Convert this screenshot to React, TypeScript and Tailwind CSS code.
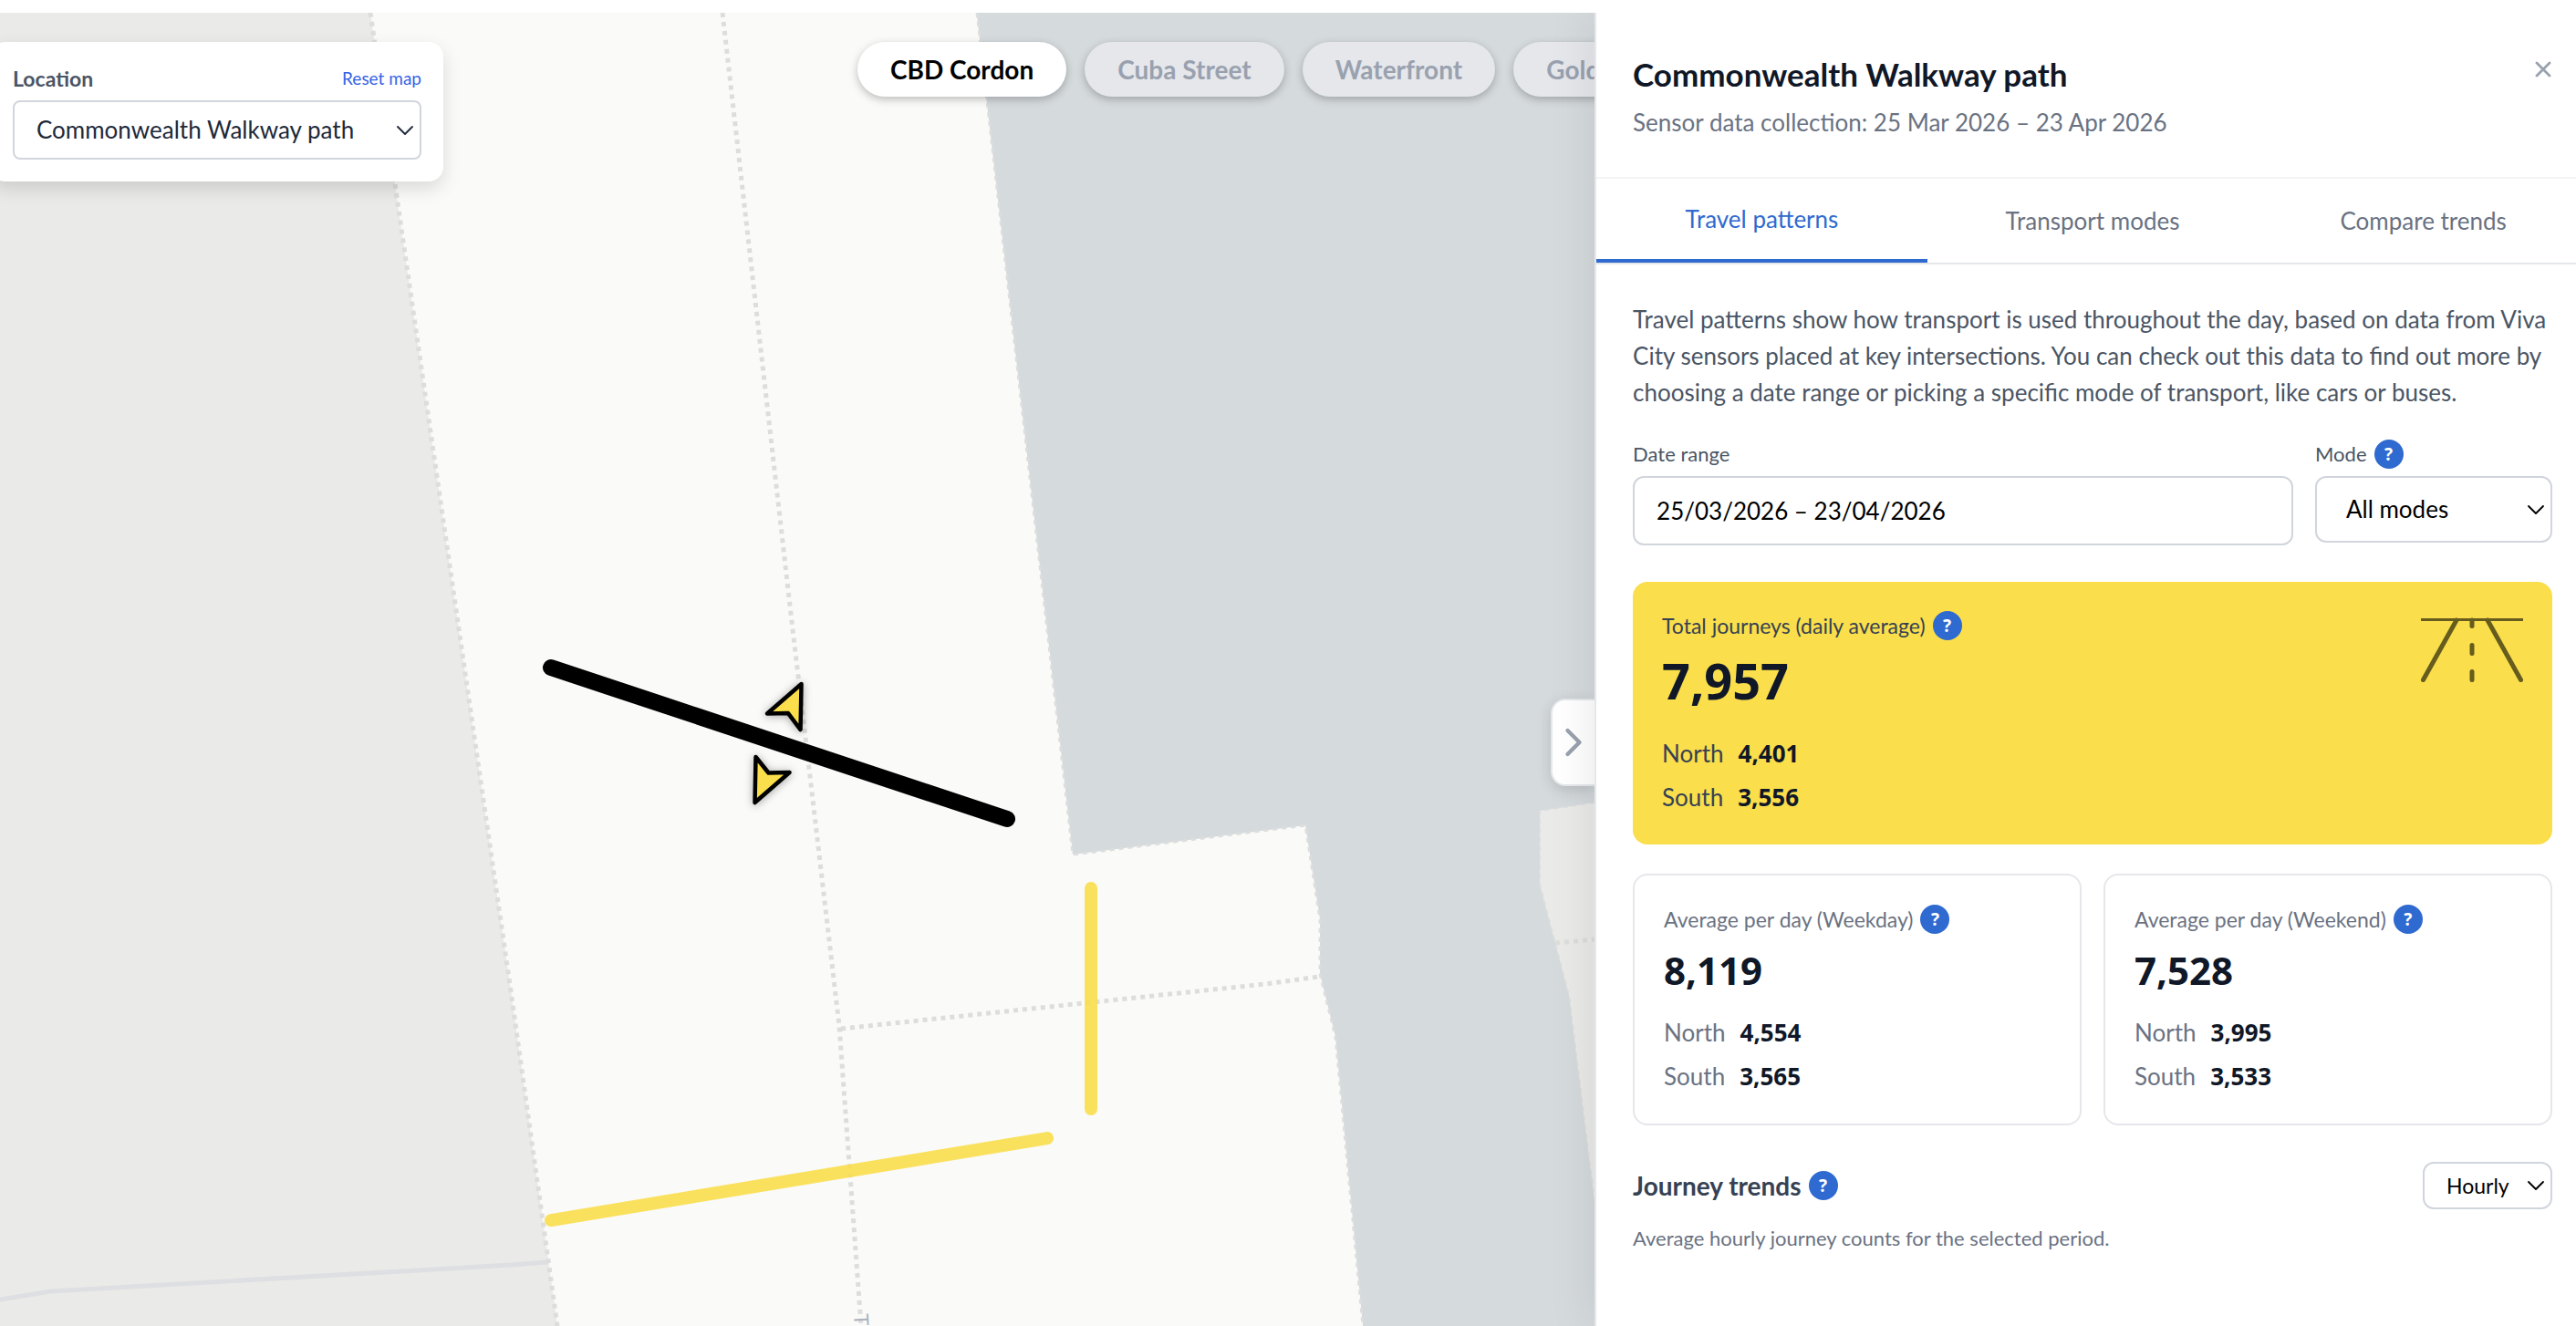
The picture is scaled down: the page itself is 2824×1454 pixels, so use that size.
import React from 'react';
import { ChevronDown, ChevronRight, X } from 'lucide-react';

const areas = ['CBD Cordon', 'Cuba Street', 'Waterfront', 'Golden Mile'];
const tabs = ['Travel patterns', 'Transport modes', 'Compare trends'];

function Help({ topic }: { topic: string }) {
  return (
    <button
      type="button"
      aria-label={`About ${topic}`}
      className="flex size-8 shrink-0 items-center justify-center rounded-full bg-[#2f6ad0] font-['Noto_Sans',sans-serif] text-[19px] leading-none font-bold text-white"
    >
      ?
    </button>
  );
}

function Chevron() {
  return (
    <ChevronDown
      aria-hidden
      strokeWidth={1.4}
      className="pointer-events-none absolute top-1/2 right-0.5 size-8 -translate-y-1/2"
    />
  );
}

function Directions({ north, south, label }: { north: string; south: string; label: string }) {
  return (
    <dl className={`flex flex-col gap-2 text-[26px] leading-10 ${label}`}>
      <div className="flex gap-4">
        <dt>North</dt>
        <dd className="font-['Noto_Sans',sans-serif] font-bold text-gray-900">{north}</dd>
      </div>
      <div className="flex gap-4">
        <dt>South</dt>
        <dd className="font-['Noto_Sans',sans-serif] font-bold text-gray-900">{south}</dd>
      </div>
    </dl>
  );
}

function AverageCard(props: { title: string; total: string; north: string; south: string }) {
  return (
    <article className="flex-1 rounded-2xl border-2 border-gray-200 p-8">
      <div className="flex h-8 items-center gap-2 text-[23px] text-gray-500">
        <h3>{props.title}</h3>
        <Help topic={props.title} />
      </div>
      <p className="mt-1 mb-3 font-['Noto_Sans',sans-serif] text-[42px] leading-[72px] font-bold text-gray-900">
        {props.total}
      </p>
      <Directions north={props.north} south={props.south} label="text-gray-500" />
    </article>
  );
}

function RoadIcon() {
  return (
    <svg aria-hidden viewBox="0 0 112 80" className="h-20 w-28 text-[#655c1d]" fill="none" stroke="currentColor">
      <path d="M0 9.5H112" strokeWidth="3" />
      <g strokeWidth="5" strokeLinecap="round">
        <path d="M39 10 2.5 75.5M73 10l36.500 65.500" />
        <path d="M56 10v6.500M56 37.500v9M56 66.500v9" />
      </g>
    </svg>
  );
}

function MapCanvas() {
  return (
    <svg
      role="img"
      aria-label="Map of sensor locations"
      viewBox="0 14 1748 1440"
      preserveAspectRatio="xMinYMin slice"
      className="absolute inset-0 size-full bg-[#d5dadd]"
      fill="none"
    >
      <path d="M0 0H410L560 1087 611 1454H0Z" fill="#eaeae8" />
      <path d="M0 1425 55 1416 560 1387 600 1384" stroke="#dedfe2" strokeWidth="5" />
      <path
        d="M404 0 560 1087 611 1454H1494L1464 1137 1447 1068V1008L1431 905 1176 937 1069 0Z"
        fill="#fafaf8"
      />
      <path d="M1688 889 1748 880V1318L1720 1092 1688 970Z" fill="#eaeae8" />
      <g stroke="#dddddc" strokeWidth="5" strokeDasharray="5 5">
        <path d="M406 14 560 1087 611 1454" />
        <path d="M792 14 868 682 889 860 920 1125 944 1454" />
        <path d="M922 1128 1387 1079 1445 1071" />
        <path d="M1705 1034 1748 1030" />
      </g>
      <g stroke="#dcdddd" strokeWidth="3" strokeDasharray="5 5">
        <path d="M1071 14 1176 937 1431 905 1447 1008V1068L1464 1137 1494 1454" />
        <path d="M1748 880 1688 889V970L1720 1092 1748 1318" strokeWidth="2" />
      </g>
      <text
        transform="translate(936 1441) rotate(87)"
        fill="#aab2bb"
        className="font-['Lato',sans-serif] text-[22px]"
      >
        T
      </text>
      <g stroke="#fade4b" strokeOpacity="0.9" strokeWidth="14" strokeLinecap="round">
        <path d="M1196 974V1216" />
        <path d="M604 1338 1148 1248" />
      </g>
      <path d="M604 732 1104 898" stroke="#000" strokeWidth="18" strokeLinecap="round" />
      <g
        fill="#fade4b"
        stroke="#000"
        strokeWidth="4.500"
        strokeLinejoin="round"
        className="drop-shadow-[0_1px_5px_rgba(0,0,0,0.35)]"
      >
        <path d="M878.500 750 841 782.500 864 782 877.500 800Z" />
        <path d="M828.500 830 842.500 847.500 865.500 847 827.500 880Z" />
      </g>
    </svg>
  );
}

export default function App() {
  return (
    <div className="h-screen bg-white pt-3.5 font-['Lato',sans-serif] text-gray-900">
      <div className="flex h-full overflow-hidden">
        <main className="relative min-w-0 flex-1 overflow-hidden">
          <MapCanvas />

          <nav
            aria-label="Areas"
            className="absolute top-0 right-0 left-[924px] flex gap-5 overflow-hidden pt-8 pb-4 pl-4 whitespace-nowrap"
          >
            {areas.map((name, i) => (
              <button
                key={name}
                type="button"
                aria-pressed={i === 0}
                className={`h-[60px] shrink-0 rounded-full px-9 text-[28px] leading-none font-bold shadow-[0_3px_10px_rgba(0,0,0,0.25)] ${
                  i === 0 ? 'bg-white text-black' : 'bg-gray-200 text-gray-400'
                }`}
              >
                {name}
              </button>
            ))}
          </nav>

          <section className="absolute top-8 -left-2.5 w-[496px] rounded-2xl bg-white p-6 shadow-[0_8px_20px_rgba(0,0,0,0.13)]">
            <div className="mb-2 flex items-center justify-between leading-8">
              <label htmlFor="location" className="text-[23px] font-bold text-gray-600">
                Location
              </label>
              <button type="button" className="text-[19px] text-[#3563e6]">
                Reset map
              </button>
            </div>
            <div className="relative text-gray-800">
              <select
                id="location"
                className="h-[65px] w-full appearance-none rounded-lg border-2 border-gray-300 bg-white px-6 text-[26px]"
              >
                <option>Commonwealth Walkway path</option>
              </select>
              <Chevron />
            </div>
          </section>

          <button
            type="button"
            aria-label="Collapse panel"
            className="absolute top-[752px] right-0 flex h-24 w-12 items-center justify-center rounded-l-2xl border-2 border-r-0 border-gray-200 bg-white text-gray-400 shadow-[0_4px_16px_rgba(0,0,0,0.15)]"
          >
            <ChevronRight aria-hidden className="size-[52px] shrink-0" />
          </button>
        </main>

        <aside className="relative w-[38.1%] shrink-0 border-l-2 border-gray-200 bg-white shadow-[0_0_50px_rgba(0,0,0,0.1)]">
          <div className="overflow-hidden">
            <header className="flex items-start justify-between border-b-2 border-gray-100 pt-[42px] pr-5 pb-10 pl-10">
              <div>
                <h1 className="text-[35px] leading-[50px] font-bold">Commonwealth Walkway path</h1>
                <p className="mt-2 text-[26px] leading-10 text-gray-500">
                  Sensor data collection: 25 Mar 2026 – 23 Apr 2026
                </p>
              </div>
              <button
                type="button"
                aria-label="Close"
                className="flex h-10 w-8 items-center justify-center text-gray-400"
              >
                <X aria-hidden strokeWidth={2.4} className="size-7 shrink-0" />
              </button>
            </header>

            <div role="tablist" className="flex h-[94px] w-[calc(100%+14px)] border-b-2 border-gray-200">
              {tabs.map((name, i) => (
                <button
                  key={name}
                  type="button"
                  role="tab"
                  aria-selected={i === 0}
                  className={`flex-1 text-[26px] ${
                    i === 0 ? 'border-b-4 border-[#2f6ad0] text-[#2f6ad0]' : 'text-gray-500'
                  }`}
                >
                  {name}
                </button>
              ))}
            </div>

            <div className="pt-10 pr-[26px] pl-10">
              <p className="text-[26px] leading-10 text-gray-600">
                Travel patterns show how transport is used throughout the day, based on data from Viva City
                sensors placed at key intersections. You can check out this data to find out more by choosing
                a date range or picking a specific mode of transport, like cars or buses.
              </p>

              <div className="mt-8 flex items-start gap-6 text-black">
                <div className="flex-1">
                  <label htmlFor="range" className="mb-2 block text-[22px] leading-8 text-gray-600">
                    Date range
                  </label>
                  <input
                    id="range"
                    type="text"
                    defaultValue="25/03/2026 – 23/04/2026"
                    className="h-[76px] w-full rounded-xl border-2 border-gray-300 px-6 text-[26px]"
                  />
                </div>
                <div className="w-[260px]">
                  <div className="mb-2 flex items-center gap-2 text-[22px] leading-8 text-gray-600">
                    <label htmlFor="mode">Mode</label>
                    <Help topic="modes" />
                  </div>
                  <div className="relative">
                    <select
                      id="mode"
                      className="h-[73px] w-full appearance-none rounded-xl border-2 border-gray-300 bg-white px-8 text-[26px]"
                    >
                      <option>All modes</option>
                    </select>
                    <Chevron />
                  </div>
                </div>
              </div>

              <article className="mt-10 flex items-start justify-between rounded-2xl bg-[#fade4b] p-8">
                <div>
                  <div className="flex h-8 items-center gap-2 text-[23px] text-gray-700">
                    <h2>Total journeys (daily average)</h2>
                    <Help topic="total journeys" />
                  </div>
                  <p className="mt-2 mb-6 font-['Noto_Sans',sans-serif] text-[54px] leading-[72px] font-bold">7,957</p>
                  <Directions north="4,401" south="3,556" label="text-gray-700" />
                </div>
                <RoadIcon />
              </article>

              <div className="mt-8 flex gap-6">
                <AverageCard title="Average per day (Weekday)" total="8,119" north="4,554" south="3,565" />
                <AverageCard title="Average per day (Weekend)" total="7,528" north="3,995" south="3,533" />
              </div>

              <section className="mt-10">
                <div className="flex items-center justify-between">
                  <div className="flex items-center gap-2 text-[28px] leading-8 font-bold text-gray-700">
                    <h2>Journey trends</h2>
                    <Help topic="journey trends" />
                  </div>
                  <div className="relative text-black">
                    <select
                      aria-label="Interval"
                      className="h-[52px] w-[142px] appearance-none rounded-xl border-2 border-gray-300 bg-white pl-6 text-[23px]"
                    >
                      <option>Hourly</option>
                    </select>
                    <Chevron />
                  </div>
                </div>
                <p className="mt-4 text-[22px] leading-8 text-gray-500">
                  Average hourly journey counts for the selected period.
                </p>
              </section>
            </div>
          </div>
        </aside>
      </div>
    </div>
  );
}
